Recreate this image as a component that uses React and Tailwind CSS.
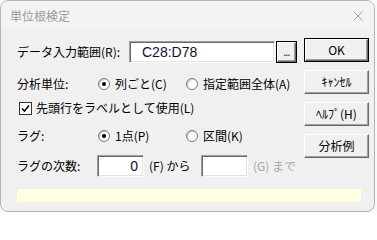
import React from 'react';

const font = "font-['Noto_Sans_CJK_JP','Noto_Sans',sans-serif]";

const raised =
  'border border-t-white border-l-white border-r-[#696969] border-b-[#696969] shadow-[inset_-1px_-1px_0_#a0a0a0] bg-[#f0f0f0]';
const sunken =
  'border border-t-[#a0a0a0] border-l-[#a0a0a0] border-r-white border-b-white shadow-[inset_1px_1px_0_#696969,inset_-1px_-1px_0_#e3e3e3] bg-white';

const Radio = ({ checked, label }) => (
  <div className="flex items-center">
    <span className="w-[12px] h-[12px] rounded-full border border-[#7a7a7a] bg-white flex items-center justify-center shadow-[inset_1px_1px_0_#c8c8c8]">
      {checked && <span className="w-[4px] h-[4px] rounded-full bg-black" />}
    </span>
    <span className="ml-[5px]">{label}</span>
  </div>
);

const Btn = ({ children, isDefault }) =>
  isDefault ? (
    <div className="h-[24px] border border-black">
      <div className={`h-full flex items-center justify-center ${raised}`}>{children}</div>
    </div>
  ) : (
    <div className={`h-[24px] flex items-center justify-center ${raised}`}>{children}</div>
  );

export default function App() {
  return (
    <div className={`w-[377px] h-[214px] bg-[#fafafa] ${font} text-[12px] leading-none text-black`}>
      <div className="w-[375px] h-[212px] border border-[#b4b4b4] rounded-[8px] bg-[#f0f0f0] overflow-hidden">
        {/* title bar */}
        <div className="h-[29px] bg-[#f3f3f3] flex items-center justify-between pl-[9px] pr-[9px]">
          <span className="text-[12px] text-[#9b9b9b]">単位根検定</span>
          <svg width="10" height="10" viewBox="0 0 10 10" className="mr-[2px]">
            <path d="M0.5 0.5 L9.5 9.5 M9.5 0.5 L0.5 9.5" stroke="#a0a0a0" strokeWidth="1" fill="none" />
          </svg>
        </div>

        <div className="flex">
          {/* left column */}
          <div className="flex-1 pl-[16px] pt-[11px]">
            <div className="flex items-center h-[22px]">
              <span className="w-[112px]">データ入力範囲(R):</span>
              <div className={`w-[146px] h-[22px] flex items-center pl-[12px] ${sunken}`}>
                <span className="font-['Liberation_Sans',sans-serif] text-[14px] text-[#101035]">C28:D78</span>
              </div>
              <div className="ml-[1px] w-[21px] h-[22px] border border-black">
                <div className={`h-full flex items-end justify-center pb-[3px] ${raised}`}>
                  <span className="font-['Liberation_Sans',sans-serif] text-[9px] font-bold text-[#1f3f8f] tracking-[-0.5px]">...</span>
                </div>
              </div>
            </div>

            <div className="flex items-center h-[20px] mt-[11px]">
              <span className="w-[81px]">分析単位:</span>
              <div className="w-[88px]">
                <Radio checked label="列ごと(C)" />
              </div>
              <Radio label="指定範囲全体(A)" />
            </div>

            <div className="flex items-center h-[20px] mt-[4px]">
              <span className="ml-[2px] w-[13px] h-[13px] border border-[#333] bg-white flex items-center justify-center">
                <svg width="9" height="9" viewBox="0 0 9 9">
                  <path d="M1 4.5 L3.5 7 L8 1.5" stroke="#000" strokeWidth="1.6" fill="none" />
                </svg>
              </span>
              <span className="ml-[4px]">先頭行をラベルとして使用(L)</span>
            </div>

            <div className="flex items-center h-[20px] mt-[8px]">
              <span className="w-[81px]">ラグ:</span>
              <div className="w-[88px]">
                <Radio checked label="1点(P)" />
              </div>
              <Radio label="区間(K)" />
            </div>

            <div className="flex items-center h-[22px] mt-[9px]">
              <span className="w-[80px]">ラグの次数:</span>
              <div className={`w-[47px] h-[22px] flex items-center justify-end pr-[5px] ${sunken}`}>
                <span className="font-['Liberation_Sans',sans-serif] text-[14px] text-[#101035]">0</span>
              </div>
              <span className="ml-[5px] w-[52px]">(F) から</span>
              <div className={`w-[47px] h-[22px] ${sunken}`} />
              <span className="ml-[5px] text-[#a8a8a8]">(G) まで</span>
            </div>
          </div>

          {/* right buttons */}
          <div className="w-[65px] mr-[5px] pt-[8px] flex flex-col gap-[8px]">
            <Btn isDefault>OK</Btn>
            <Btn>ｷｬﾝｾﾙ</Btn>
            <Btn>ﾍﾙﾌﾟ(H)</Btn>
            <Btn>分析例</Btn>
          </div>
        </div>

        <div className="ml-[16px] mt-[12px] w-[344px] h-[13px] bg-[#ffffe1]" />
      </div>
    </div>
  );
}
